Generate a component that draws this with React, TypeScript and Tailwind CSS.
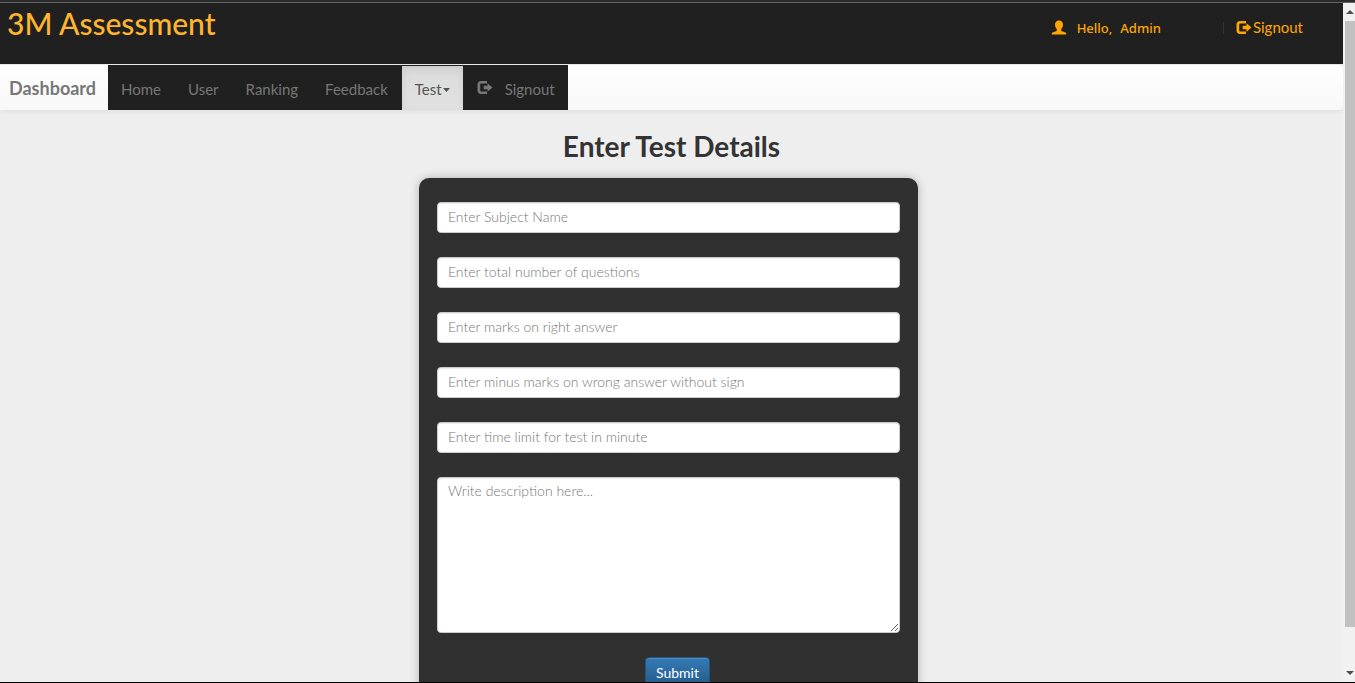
import type { ReactNode } from "react";

const fields = [
  { id: "name", label: "Enter Subject Name" },
  { id: "total", label: "Enter total number of questions" },
  { id: "right", label: "Enter marks on right answer" },
  { id: "wrong", label: "Enter minus marks on wrong answer without sign" },
  { id: "time", label: "Enter time limit for test in minute" },
];

const control =
  "block w-full rounded-sm border border-[#ccc] bg-white px-2.5 text-sm font-light text-[#555] shadow-[inset_0_1px_1px_rgba(0,0,0,0.075)] placeholder:text-[#777] focus:outline-none focus:border-[#66afe9]";

function UserIcon() {
  return (
    <svg className="h-4 w-4" viewBox="0 0 16 16" fill="currentColor" aria-hidden="true">
      <path d="M8 .5C5.500.500 4 2.200 4 4.600c0 1.900.9 3.600 1.900 4.600v.9c0 .6-.3.900-.9 1.100l-2.900 1C1.200 12.600.700 13.200.700 14.500h14.600c0-1.300-.5-1.900-1.400-2.300l-2.900-1c-.6-.2-.9-.5-.9-1.100v-.9c1-1 1.900-2.700 1.900-4.600C12 2.200 10.500.500 8 .5z" />
    </svg>
  );
}

function LogOutIcon() {
  return (
    <svg className="h-4 w-4" viewBox="0 0 16 16" fill="currentColor" aria-hidden="true">
      <path d="M10 1H4C1.900 1 .5 2.400.5 4.500v6C.5 12.600 1.900 14 4 14h6v-2.500H4.500c-.8 0-1.300-.5-1.300-1.300V4.800c0-.8.5-1.300 1.300-1.300H10z" />
      <path d="M10.500 3.300v2.500H6.700v3.400h3.800v2.500L15.500 7.500z" />
    </svg>
  );
}

function NavItem({ children, active = false }: { children: ReactNode; active?: boolean }) {
  return (
    <li className="flex">
      <a
        href="#"
        className={
          active
            ? "mt-px flex items-center bg-gradient-to-b from-[#dbdbdb] to-[#e2e2e2] px-[13px] pt-1 text-[#555] shadow-[inset_0_3px_9px_rgba(0,0,0,0.075)]"
            : "flex items-center px-[13px] pt-1 text-[#777]"
        }
      >
        {children}
      </a>
    </li>
  );
}

function Scrollbar() {
  return (
    <div className="flex w-3 shrink-0 flex-col items-end bg-[#f1f1f1]" aria-hidden="true">
      <div className="flex h-[18px] w-2.5 shrink-0 items-center justify-center">
        <svg className="h-1 w-2" viewBox="0 0 8 4" fill="#505050">
          <path d="M4 0 8 4H0z" />
        </svg>
      </div>
      <div className="w-2.5 grow-[606] bg-[#c1c1c1]" />
      <div className="grow-[37]" />
      <div className="flex h-[18px] w-2.5 shrink-0 items-center justify-center">
        <svg className="h-1 w-2" viewBox="0 0 8 4" fill="#505050">
          <path d="M0 0h8L4 4z" />
        </svg>
      </div>
    </div>
  );
}

export default function App() {
  return (
    <div className="flex h-screen flex-col overflow-hidden border-b border-black bg-[#eee] font-['Lato',sans-serif] text-sm text-[#333]">
      <div className="h-[3px] shrink-0 border-b border-[#666] bg-[#2b2b2b]" />
      <div className="flex min-h-0 flex-1">
        <div className="min-w-0 flex-1 overflow-hidden">
          <header className="flex h-[61px] items-start justify-between bg-[#202020] pl-[7px] pr-10">
            <span className="text-[30px] font-medium leading-10 text-[#ffb52e]">3M Assessment</span>
            <div className="flex h-[50px] items-center text-[#ffa500]">
              <span className="flex items-center gap-2.5 font-['Noto_Sans',sans-serif] text-[13px] font-medium">
                <UserIcon />
                <span className="flex gap-2">
                  <span>Hello,</span>
                  <a href="#">Admin</a>
                </span>
              </span>
              <span className="ml-[62px] mr-3 h-3 w-px bg-[#333]" />
              <a href="#" className="flex items-center gap-px text-[15px]">
                <LogOutIcon />
                Signout
              </a>
            </div>
          </header>

          <nav className="flex h-[46px] rounded-r border-t border-[#e7e7e7] bg-gradient-to-b from-white to-[#f8f8f8] shadow-[0_1px_5px_rgba(0,0,0,0.075)]">
            <a href="#" className="flex items-center pl-[9px] pr-3 text-lg font-bold text-[#777]">
              Dashboard
            </a>
            <ul className="flex gap-px bg-[#202020] text-[15px]">
              <NavItem>Home</NavItem>
              <NavItem>User</NavItem>
              <NavItem>Ranking</NavItem>
              <NavItem>Feedback</NavItem>
              <NavItem active>
                Test
                <svg className="h-1 w-2" viewBox="0 0 8 4" fill="currentColor" aria-hidden="true">
                  <path d="M1 0h7L4.500 4z" />
                </svg>
              </NavItem>
              <NavItem>
                <span className="mb-1 mr-3">
                  <LogOutIcon />
                </span>
                Signout
              </NavItem>
            </ul>
          </nav>

          <main>
            <h1 className="pt-5 text-center text-[28px] font-bold leading-8">Enter Test Details</h1>
            <div className="pr-1.5">
              <form className="mx-auto mt-4 flex w-full max-w-[499px] flex-col gap-6 rounded-[10px] bg-[#303030] px-[18px] py-6 shadow-[0_0_10px_rgba(0,0,0,0.25)]">
                {fields.map((f) => (
                  <input key={f.id} id={f.id} name={f.id} type="text" aria-label={f.label} placeholder={f.label} className={`${control} h-[31px] pb-0.5`} />
                ))}
                <textarea
                  name="desc"
                  aria-label="Description"
                  placeholder="Write description here..."
                  className={`${control} h-[156px] resize py-[5px] leading-4`}
                />
                <div className="flex justify-center pl-[18px]">
                  <button
                    type="submit"
                    className="h-[31px] rounded-sm border border-[#245580] bg-gradient-to-b from-[#337ab7] to-[#265a88] px-2.5 text-sm text-white shadow-[inset_0_1px_0_rgba(255,255,255,0.15)]"
                  >
                    Submit
                  </button>
                </div>
              </form>
            </div>
          </main>
        </div>
        <Scrollbar />
      </div>
    </div>
  );
}
